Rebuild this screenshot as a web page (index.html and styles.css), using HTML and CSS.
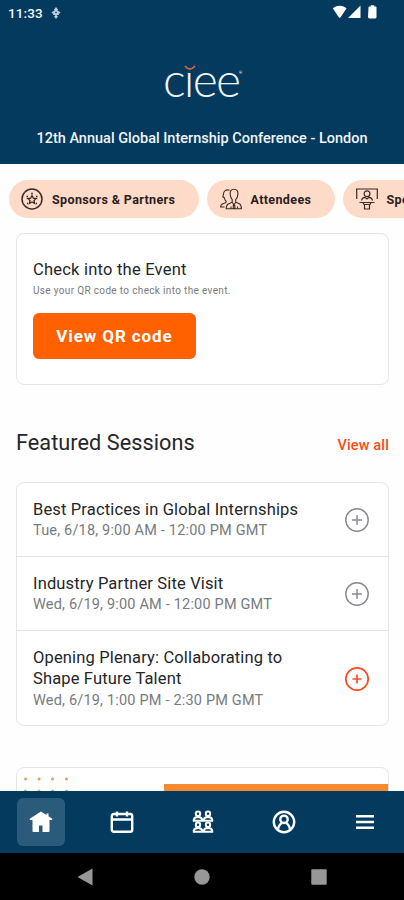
FILE: index.html
```html
<!DOCTYPE html>
<html lang="en">
<head>
<meta charset="utf-8">
<meta name="viewport" content="width=device-width, initial-scale=1">
<title>CIEE Conference</title>
<link rel="stylesheet" href="styles.css">
</head>
<body>
<div class="screen">
  <header class="header">
    <div class="status">
      <span class="time">11:33</span>
      <svg class="mic" width="10" height="12" viewBox="0 0 10 12"><path d="M5 0 7 2.500 6.500 5h-3L3 2.500zM0.500 5 3 4h4l2.500 1L7.500 8h-5zM5 7.500 7 9.500 5 12 3 9.500z" fill="#b9cbd8"/><circle cx="5" cy="5.500" r=".8" fill="#033a5e"/></svg>
      <svg class="signals" width="46" height="14" viewBox="0 0 46 14" fill="#fff"><path d="M.8 3.200Q7.500-1.600 14.600 3.200L8.600 12.200Q7.700 13.300 6.800 12.200zM28.500 .500V13H16zM36.500 2.500Q36.500 1.500 37.500 1.500h1.200V.3h3.600v1.200h1.200q1 0 1 1V12q0 1.500-1.500 1.500h-5Q36 13.500 36 12z"/></svg>
    </div>
    <div class="logo"><span class="word">cıee</span><svg class="smile" width="12" height="6" viewBox="0 0 12 6"><path d="M1 1Q6 7 11 1" fill="none" stroke="#d9653f" stroke-width="1.800"/></svg><span class="reg">®</span></div>
    <h1 class="event">12th Annual Global Internship Conference - London</h1>
  </header>

  <main class="content">
    <nav class="pills">
      <a class="pill sponsors">
        <svg width="22" height="22" viewBox="0 0 22 22" fill="none" stroke="#3b2a25"><circle cx="11" cy="11" r="10" stroke-width="1.500"/><path d="M11 7.500 12.300 10.200 15.200 10.500 13 12.500 13.700 15.400 11 14 8.300 15.400 9 12.500 6.800 10.500 9.700 10.200z" stroke-width="1.300"/><path d="M10.200 5.500h1.600M5.500 8.500h1.500M15 8.500h1.500M6 15.500h1M15 15.500h1" stroke-width="1.500"/></svg>
        <span>Sponsors &amp; Partners</span>
      </a>
      <a class="pill attendees">
        <svg width="22" height="22" viewBox="0 0 22 22" fill="none" stroke="#3b2a25" stroke-width="1.100"><path d="M14 1.200c-3 0-4.200 2-3.800 5 .2 2.300 1 4.300 2 5.500v2.500l-4 1.700Q6.300 17 6.200 20.800h15.200q-.1-4-2-5l-3.700-1.600v-2.500c1.300-1.200 2-3.200 2.200-5.500.3-3-1-5-3.900-5z"/><path d="M12.200 14.200 14 17l1.700-2.800M11 20.500v-2M17.500 20.500v-2M13.300 17.500h1.500v3h-1.500z"/><path d="M9.500 2.300C6 1 3.300 3 3.500 6.500L2.800 9l1.500.7c.2 1.500.7 2.500 1.700 3.300v1.500L2 16.300Q.8 17 .6 19h4"/></svg>
        <span>Attendees</span>
      </a>
      <a class="pill speakers">
        <svg width="22" height="22" viewBox="0 0 22 22" fill="none" stroke="#3b2a25" stroke-width="1.200"><path d="M.7 11V1h20.600v10M0 1h22"/><circle cx="11" cy="5.800" r="2.900"/><path d="M5.500 12.500Q6 9.500 9 9.300L11 11l2-1.700q3 .2 3.500 3.200M3.500 14.500h15M7 14.500l1 2h6l1-2M8.500 16.500v4.500h5v-4.500"/></svg>
        <span>Speakers</span>
      </a>
    </nav>

    <section class="card checkin">
      <h2>Check into the Event</h2>
      <p>Use your QR code to check into the event.</p>
      <button class="qr">View QR code</button>
    </section>

    <div class="heading">
      <h2>Featured Sessions</h2>
      <a>View all</a>
    </div>

    <section class="card sessions">
      <article class="session">
        <div><h3>Best Practices in Global Internships</h3><p>Tue, 6/18, 9:00 AM - 12:00 PM GMT</p></div>
        <svg class="add" width="24" height="24" viewBox="0 0 24 24"><circle cx="12" cy="12" r="11.200"/><path d="M12 7v10M7 12h10"/></svg>
      </article>
      <article class="session">
        <div><h3>Industry Partner Site Visit</h3><p>Wed, 6/19, 9:00 AM - 12:00 PM GMT</p></div>
        <svg class="add" width="24" height="24" viewBox="0 0 24 24"><circle cx="12" cy="12" r="11.200"/><path d="M12 7v10M7 12h10"/></svg>
      </article>
      <article class="session">
        <div><h3>Opening Plenary: Collaborating to<br>Shape Future Talent</h3><p>Wed, 6/19, 1:00 PM - 2:30 PM GMT</p></div>
        <svg class="add hot" width="24" height="24" viewBox="0 0 24 24"><circle cx="12" cy="12" r="11.200"/><path d="M12 7.500v9M7.500 12h9"/></svg>
      </article>
    </section>

    <section class="card banner">
      <svg width="52" height="23" viewBox="0 0 52 23" fill="#f39a56"><circle cx="8.500" cy="11" r="1.500"/><circle cx="22" cy="11" r="1.500"/><circle cx="35.500" cy="11" r="1.500"/><circle cx="49.500" cy="11" r="1.500"/><circle cx="8.500" cy="23" r="1.500"/><circle cx="22" cy="23" r="1.500"/><circle cx="35.500" cy="23" r="1.500"/><circle cx="49.500" cy="23" r="1.500"/></svg>
      <div class="strip"></div>
    </section>
  </main>

  <nav class="tabs">
    <a class="tab active"><svg width="24" height="24" viewBox="0 0 24 24" fill="#fff"><path d="M12 1.500.8 8.800V10H3.500V21q0 1 1 1H10v-6.500h3.500V22h6q1 0 1-1V10h2.700V8.800L19.500 6.300V3.500h-2V5z"/></svg></a>
    <a class="tab"><svg width="24" height="24" viewBox="0 0 24 24" fill="none" stroke="#fff" stroke-width="2.400"><rect x="1.800" y="4" width="20.400" height="17.800" rx="2"/><path d="M2 9.500h20M7 1.500v5M17 1.500v5"/></svg></a>
    <a class="tab"><svg width="24" height="24" viewBox="0 0 24 24" fill="none" stroke="#fff" stroke-width="2"><g id="p"><circle cx="7" cy="3.800" r="2.200"/><path d="M2.800 10.800V9.500Q3.500 7 7 7t4.200 2.500v1.300z"/></g><use href="#p" x="10"/><use href="#p" y="11"/><use href="#p" x="10" y="11"/></svg></a>
    <a class="tab"><svg width="24" height="24" viewBox="0 0 24 24" fill="none" stroke="#fff" stroke-width="2.400"><circle cx="12" cy="12" r="10.200"/><circle cx="12" cy="9.300" r="3.700"/><path d="M5.800 19.500Q7 14.500 10 13M18.200 19.500Q17 14.500 14 13"/></svg></a>
    <a class="tab"><svg width="24" height="24" viewBox="0 0 24 24" fill="none" stroke="#fff" stroke-width="2.600"><path d="M3 6.200h18M3 12h18M3 17.700h18"/></svg></a>
  </nav>

  <footer class="system">
    <svg width="16" height="18" viewBox="0 0 16 18"><path d="M.5 9 15.500.5v17z"/></svg>
    <svg width="16" height="16" viewBox="0 0 16 16"><circle cx="8" cy="8" r="7.700"/></svg>
    <svg width="16" height="16" viewBox="0 0 16 16"><rect x=".3" y=".3" width="15.400" height="15.400" rx="1"/></svg>
  </footer>
</div>
</body>
</html>
```
FILE: styles.css
```css
* { box-sizing: border-box; margin: 0; padding: 0; }
body { font-family: Roboto, "Liberation Sans", sans-serif; background: #fefeff; color: #242629; }
svg { display: block; flex: none; }
.screen { width: 404px; height: 900px; display: flex; flex-direction: column; overflow: hidden; }

.header { height: 164px; flex: none; background: #033a5e; color: #f1f5fa; display: flex; flex-direction: column; align-items: center; }
.status { width: 100%; height: 26px; padding: 0 26px 0 8px; display: flex; align-items: center; }
.time { font-size: 13.500px; font-weight: 500; letter-spacing: .1px; line-height: 26px; }
.mic { margin-left: 8px; }
.signals { margin-left: auto; margin-top: -2px; }
.logo { position: relative; width: 78px; height: 58px; margin-top: 24px; }
.word { display: block; width: 75px; font-family: Lato, sans-serif; font-weight: 300; font-size: 48px; line-height: 58px; letter-spacing: -1.800px; white-space: nowrap; }
.smile { position: absolute; left: 21px; top: 15px; }
.reg { position: absolute; left: 76px; top: 20px; font-size: 4px; }
.event { margin-top: 21px; font-size: 14.500px; line-height: 20px; font-weight: 500; white-space: nowrap; }

.content { height: 627px; flex: none; overflow: hidden; padding: 16px 0 0 9px; }
.pills { display: flex; gap: 8px; height: 38px; }
.pill { flex: none; display: flex; align-items: center; gap: 9px; height: 38px; padding-left: 12px; border-radius: 19px; background: #fedbc8; color: #29211f; font-size: 12.500px; font-weight: 700; letter-spacing: .37px; white-space: nowrap; }
.sponsors { width: 190px; }
.attendees { width: 127.500px; padding-left: 12.500px; }
.speakers { width: 127px; padding-left: 13px; }

.card { width: 373px; margin-left: 7px; border: 1px solid #e5e6e8; border-radius: 8px; background: #fff; }
.checkin { height: 152px; margin-top: 15px; padding: 25px 16px; }
.checkin h2 { font-size: 16.500px; line-height: 22px; font-weight: 400; letter-spacing: .22px; }
.checkin p { font-size: 10px; line-height: 12px; margin-top: 4px; color: #777a7e; letter-spacing: .34px; }
.qr { display: block; width: 163px; height: 46px; margin-top: 16px; border: 0; border-radius: 6px; background: #ff6100; color: #fff; font: 700 17px/46px Roboto, sans-serif; letter-spacing: .9px; }

.heading { display: flex; justify-content: space-between; align-items: center; height: 30px; margin: 43px 15px 24px 7px; }
.heading h2 { font-size: 21.700px; line-height: 30px; font-weight: 400; letter-spacing: .04px; }
.heading a { color: #fb4b16; font-size: 14.500px; font-weight: 500; padding-top: 5px; letter-spacing: .15px; }

.sessions { height: 244px; }
.session { display: flex; justify-content: space-between; align-items: center; height: 74px; padding: 1px 19px 0 16px; border-bottom: 1px solid #e5e6e8; }
.session:last-child { height: 95px; border: 0; }
.session h3 { font-size: 16.500px; line-height: 21px; font-weight: 400; letter-spacing: .15px; white-space: nowrap; }
.session p { font-size: 14.500px; line-height: 21px; margin-top: .5px; color: #777b80; letter-spacing: .19px; white-space: nowrap; }
.add { fill: none; stroke: #85898d; stroke-width: 1.400; }
.hot { stroke: #f94b22; stroke-width: 1.700; }
.banner { height: 100px; margin-top: 41px; display: flex; justify-content: space-between; overflow: hidden; }
.strip { width: 224px; height: 80px; margin-top: 16px; background: #f58a30; }

.tabs { height: 62px; flex: none; background: #033a5e; display: grid; grid-template-columns: repeat(5, 48px); justify-content: space-between; align-items: center; padding: 0 15px 0 17px; }
.tab { width: 48px; height: 48px; border-radius: 6px; display: flex; align-items: center; justify-content: center; }
.active { background: #2b5b7b; }
.system { height: 47px; flex: none; background: #000; display: flex; align-items: center; justify-content: space-between; padding: 0 77px; }
.system svg { fill: #979797; }
```
